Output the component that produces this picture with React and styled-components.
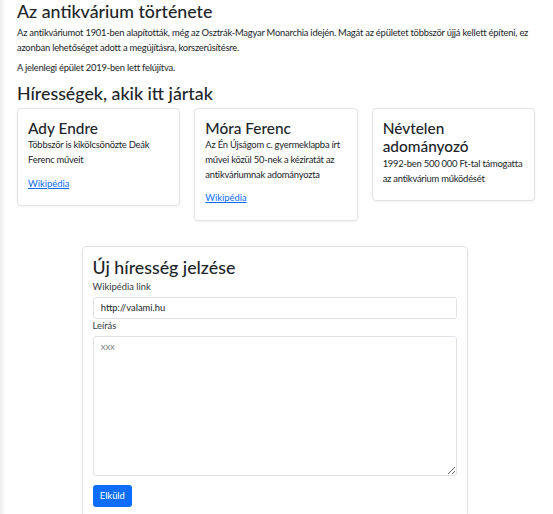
import React from 'react';
import styled, { createGlobalStyle } from 'styled-components';

const GlobalStyle = createGlobalStyle`
  * {
    box-sizing: border-box;
  }

  body {
    margin: 0;
    background: linear-gradient(to right, #ebebeb, #ffffff 6px);
    color: #212529;
    font-family: Lato, "Noto Sans", sans-serif;
    font-size: 9.4px;
    line-height: 1.55;
  }
`;

const celebs = [
  {
    name: 'Ady Endre',
    text: 'Többször is kikölcsönözte Deák Ferenc műveit',
    link: true,
  },
  {
    name: 'Móra Ferenc',
    text: 'Az Én Újságom c. gyermeklapba írt művei közül 50-nek a kéziratát az antikváriumnak adományozta',
    link: true,
  },
  {
    name: 'Névtelen adományozó',
    text: '1992-ben 500 000 Ft-tal támogatta az antikvárium működését',
    link: false,
  },
];

const App = () => {
  return (
    <>
      <GlobalStyle />
      <Container>
        <Heading>Az antikvárium története</Heading>
        <Text>
          Az antikváriumot 1901-ben alapították, még az Osztrák-Magyar Monarchia idején. Magát az
          épületet többször újjá kellett építeni, ez azonban lehetőséget adott a megújításra,
          korszerűsítésre.
        </Text>
        <Text>A jelenlegi épület 2019-ben lett felújítva.</Text>

        <Heading>Hírességek, akik itt jártak</Heading>
        <CardGrid>
          {celebs.map((c) => (
            <Card key={c.name}>
              <CardTitle>{c.name}</CardTitle>
              <CardText $last={!c.link}>{c.text}</CardText>
              {c.link && <CardLink href="#">Wikipédia</CardLink>}
            </Card>
          ))}
        </CardGrid>

        <FormCard>
          <FormTitle>Új híresség jelzése</FormTitle>
          <Label htmlFor="wiki">Wikipédia link</Label>
          <Input id="wiki" type="text" defaultValue="http://valami.hu" />
          <Label htmlFor="desc">Leírás</Label>
          <TextArea id="desc" placeholder="xxx" />
          <Button type="button">Elküld</Button>
        </FormCard>
      </Container>
    </>
  );
};

const Container = styled.div`
  padding: 0 18px 0 17px;
`;

const Heading = styled.h2`
  margin: 0 0 3px;
  font-size: 17.8px;
  font-weight: 500;
  line-height: 1.3;
`;

const Text = styled.p`
  margin: 0 0 6px;
  letter-spacing: -0.22px;
`;

const CardGrid = styled.div`
  display: grid;
  grid-template-columns: repeat(3, 1fr);
  gap: 14px;
  align-items: start;
`;

const Card = styled.div`
  padding: 10px 10px 14px;
  border: 1px solid #e2e3e5;
  border-radius: 4px;
  box-shadow: 0 1px 3px rgba(0, 0, 0, 0.06);
  background: #fff;
`;

const CardTitle = styled.h3`
  margin: 0 0 1px;
  font-size: 15.4px;
  font-weight: 500;
  line-height: 1.2;
`;

const CardText = styled.p`
  margin: 0 0 ${(p) => (p.$last ? '0' : '9px')};
  letter-spacing: -0.22px;
`;

const CardLink = styled.a`
  color: #0d6efd;
  text-decoration: underline;
`;

const FormCard = styled.div`
  width: 386px;
  margin: 25px 0 0 65px;
  padding: 9.6px;
  border: 1px solid #e2e3e5;
  border-radius: 4px;
  box-shadow: 0 1px 3px rgba(0, 0, 0, 0.06);
`;

const FormTitle = styled.h2`
  margin: 0;
  font-size: 17.8px;
  font-weight: 500;
  line-height: 1.3;
`;

const Label = styled.label`
  display: block;
  margin-bottom: 2.5px;
  color: #343a40;
`;

const fieldStyles = `
  display: block;
  width: 100%;
  padding: 3.6px 7.2px;
  border: 1px solid #dee2e6;
  border-radius: 3px;
  font-family: inherit;
  font-size: 9.4px;
  line-height: 1.5;
  color: #212529;
  background: #fff;
  outline: none;
`;

const Input = styled.input`
  ${fieldStyles}
  height: 22px;
`;

const TextArea = styled.textarea`
  ${fieldStyles}
  height: 140px;
  resize: vertical;

  &::placeholder {
    color: #7d848b;
  }
`;

const Button = styled.button`
  margin-top: 9px;
  height: 22px;
  padding: 0 7.2px;
  border: none;
  border-radius: 3px;
  background: #0d6efd;
  color: #fff;
  font-family: inherit;
  font-size: 9.4px;
`;

export default App;
